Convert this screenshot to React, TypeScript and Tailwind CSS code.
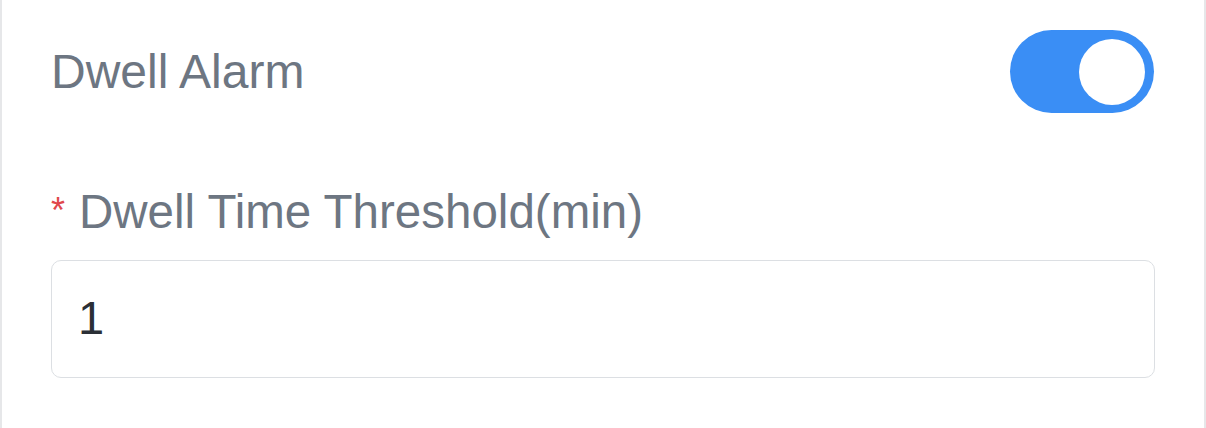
import { useState } from "react";

export default function App() {
  const [on, setOn] = useState(true);
  const [value, setValue] = useState("1");

  return (
    <div
      className="w-[1206px] h-[428px] bg-white border-x-2 border-[#e6e7e9] px-[49px] overflow-hidden"
      style={{ fontFamily: "'Liberation Sans', Arial, sans-serif" }}
    >
      {/* Switch row */}
      <div className="flex items-center justify-between pt-[30px] pr-px">
        <span className="text-[48px] leading-none text-[#6d7682]">Dwell Alarm</span>
        <button
          type="button"
          onClick={() => setOn(!on)}
          className={`flex items-center w-[144px] h-[83px] rounded-full px-[9px] ${
            on ? "bg-[#3a8ef5] justify-end" : "bg-[#dcdfe6] justify-start"
          }`}
        >
          <span className="block w-[66px] h-[66px] rounded-full bg-white" />
        </button>
      </div>

      {/* Threshold field */}
      <div className="mt-[75px] flex items-start">
        <span className="text-[36px] leading-none text-[#e0484b] mt-[5px] w-[28px]">*</span>
        <span className="text-[47.5px] leading-none text-[#6d7682]">Dwell Time Threshold(min)</span>
      </div>
      <div className="mt-[24px] h-[118px] rounded-[10px] border border-[#dcdfe3] flex items-center pl-[26px] pr-[30px]">
        <input
          value={value}
          onChange={(e) => setValue(e.target.value)}
          className="w-full bg-transparent outline-none text-[47px] text-[#2b2f36]"
        />
      </div>
    </div>
  );
}
